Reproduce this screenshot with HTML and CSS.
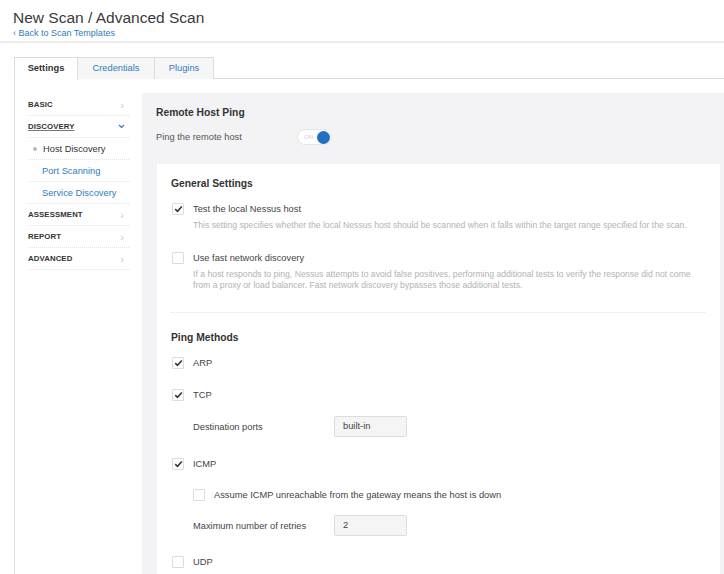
FILE: index.html
```html
<!DOCTYPE html>
<html>
<head>
<meta charset="utf-8">
<link rel="stylesheet" href="styles.css">
</head>
<body>
<header class="header">
  <h1 class="title">New Scan / Advanced Scan</h1>
  <a class="back">&lsaquo; Back to Scan Templates</a>
</header>

<nav class="tabs">
  <div class="tab active">Settings</div>
  <div class="tab tab-cred">Credentials</div>
  <div class="tab tab-plug">Plugins</div>
</nav>

<div class="layout">
  <aside class="sidebar">
    <div class="side-item"><span class="sec">BASIC</span><span class="chev">&rsaquo;</span></div>
    <div class="side-item"><span class="sec sec-open">DISCOVERY</span><span class="chev chev-down"><svg width="7" height="5" viewBox="0 0 7 5"><path d="M1 1 L3.5 3.5 L6 1" fill="none" stroke="#2e7cc1" stroke-width="1.2"/></svg></span></div>
    <div class="side-item sub current"><span class="dot"></span>Host Discovery</div>
    <div class="side-item sub link">Port Scanning</div>
    <div class="side-item sub link">Service Discovery</div>
    <div class="side-item"><span class="sec">ASSESSMENT</span><span class="chev">&rsaquo;</span></div>
    <div class="side-item"><span class="sec">REPORT</span><span class="chev">&rsaquo;</span></div>
    <div class="side-item"><span class="sec">ADVANCED</span><span class="chev">&rsaquo;</span></div>
  </aside>

  <main class="panel">
    <h2 class="panel-title">Remote Host Ping</h2>
    <div class="ping-row">
      <span class="ping-label">Ping the remote host</span>
      <span class="toggle"><span class="toggle-on">ON</span><span class="knob"></span></span>
    </div>

    <section class="card">
      <h3 class="card-title">General Settings</h3>
      <div class="check-row r-test"><span class="cb checked"><svg width="9" height="8" viewBox="0 0 9 8"><path d="M1.2 4.2 L3.5 6.3 L7.8 1.5" fill="none" stroke="#333" stroke-width="1.6"/></svg></span><span class="lbl">Test the local Nessus host</span></div>
      <p class="desc d-test">This setting specifies whether the local Nessus host should be scanned when it falls within the target range specified for the scan.</p>
      <div class="check-row r-fast"><span class="cb"></span><span class="lbl">Use fast network discovery</span></div>
      <p class="desc d-fast">If a host responds to ping, Nessus attempts to avoid false positives, performing additional tests to verify the response did not come<br>from a proxy or load balancer. Fast network discovery bypasses those additional tests.</p>
      <div class="sep"></div>

      <h3 class="card-title t-ping">Ping Methods</h3>
      <div class="check-row r-arp"><span class="cb checked"><svg width="9" height="8" viewBox="0 0 9 8"><path d="M1.2 4.2 L3.5 6.3 L7.8 1.5" fill="none" stroke="#333" stroke-width="1.6"/></svg></span><span class="lbl">ARP</span></div>
      <div class="check-row r-tcp"><span class="cb checked"><svg width="9" height="8" viewBox="0 0 9 8"><path d="M1.2 4.2 L3.5 6.3 L7.8 1.5" fill="none" stroke="#333" stroke-width="1.6"/></svg></span><span class="lbl">TCP</span></div>
      <div class="field-row r-ports"><span class="field-lbl">Destination ports</span><span class="input">built-in</span></div>
      <div class="check-row r-icmp"><span class="cb checked"><svg width="9" height="8" viewBox="0 0 9 8"><path d="M1.2 4.2 L3.5 6.3 L7.8 1.5" fill="none" stroke="#333" stroke-width="1.6"/></svg></span><span class="lbl">ICMP</span></div>
      <div class="check-row r-assume"><span class="cb"></span><span class="lbl lbl-big">Assume ICMP unreachable from the gateway means the host is down</span></div>
      <div class="field-row r-retries"><span class="field-lbl">Maximum number of retries</span><span class="input">2</span></div>
      <div class="check-row r-udp"><span class="cb"></span><span class="lbl">UDP</span></div>
    </section>
  </main>
</div>
</body>
</html>
```

FILE: styles.css
```css
* { box-sizing: border-box; }

html, body {
  margin: 0;
  padding: 0;
  background: #ffffff;
  font-family: "Liberation Sans", Arial, sans-serif;
  color: #444;
  overflow: hidden;
}

body {
  width: 724px;
  height: 574px;
}

.header {
  height: 43px;
  padding: 8px 13px 0;
  border-bottom: 2px solid #ececec;
}

.title {
  margin: 0;
  font-size: 15.5px;
  line-height: 19px;
  font-weight: normal;
  color: #3a3a3a;
}

.back {
  display: block;
  margin-top: 1px;
  font-size: 9px;
  line-height: 11px;
  color: #2e7cc1;
}

.tabs {
  display: flex;
  margin: 14px 0 0 14px;
  border-bottom: 1px solid #dcdcdc;
  height: 22px;
}

.tab {
  height: 22px;
  line-height: 20px;
  text-align: center;
  font-size: 9.3px;
  color: #2e7cc1;
  background: #f6f6f6;
  border: 1px solid #dcdcdc;
  border-left: none;
  border-bottom: none;
}

.tab.active {
  width: 64px;
  background: #ffffff;
  color: #333;
  font-weight: bold;
  border-left: 1px solid #dcdcdc;
  height: 23px;
}

.tab-cred { width: 77px; }
.tab-plug { width: 59px; }

.layout {
  display: flex;
  margin-left: 14px;
  height: 500px;
}

.sidebar {
  width: 128px;
  flex: none;
  border-left: 1px solid #e4e4e4;
  padding: 15px 13px 0 13px;
}

.side-item {
  height: 22px;
  display: flex;
  align-items: center;
  justify-content: space-between;
  border-bottom: 1px dotted #e2e2e2;
  font-size: 9.3px;
}

.sec {
  font-size: 7.8px;
  font-weight: bold;
  color: #333;
  letter-spacing: 0.1px;
}

.sec-open {
  text-decoration: underline;
  text-decoration-color: #777;
}

.chev {
  color: #c8c8c8;
  font-size: 11px;
  margin-right: 5px;
  line-height: 10px;
}

.chev-down {
  display: flex;
  margin-right: 4px;
}

.sub {
  justify-content: flex-start;
  padding-left: 14px;
  color: #333;
}

.sub.current { padding-left: 5px; }

.sub.link { color: #2e7cc1; }

.dot {
  width: 4px;
  height: 4px;
  border-radius: 50%;
  background: #bbbbbb;
  margin-right: 6px;
}

.panel {
  flex: 1;
  margin-top: 14px;
  background: #f3f3f5;
  padding: 13px 4px 0 14px;
}

.panel-title {
  margin: 0;
  font-size: 10.3px;
  line-height: 14px;
  font-weight: bold;
  color: #333;
}

.ping-row {
  display: flex;
  align-items: center;
  height: 16px;
  margin-top: 9px;
}

.ping-label {
  width: 141px;
  font-size: 9.3px;
  color: #555;
}

.toggle {
  width: 35px;
  height: 16px;
  border-radius: 8px;
  background: #fff;
  border: 1px solid #e6e6e6;
  display: flex;
  align-items: center;
  justify-content: space-between;
  padding: 0 1px 0 6px;
}

.toggle-on {
  font-size: 6px;
  color: #cfcfcf;
}

.knob {
  width: 13px;
  height: 13px;
  border-radius: 50%;
  background: #1f6fc5;
}

.card {
  margin: 18px 0 0 1px;
  background: #ffffff;
  border-top: 1px dotted #e6e6e6;
  padding: 13px 14px 20px 14px;
  height: 420px;
}

.card-title {
  margin: 0;
  font-size: 10.3px;
  line-height: 14px;
  font-weight: bold;
  color: #333;
}

.check-row {
  display: flex;
  align-items: center;
  height: 14px;
  font-size: 9.3px;
  color: #444;
}

.cb {
  width: 12px;
  height: 12px;
  border: 1px solid #dcdcdc;
  border-radius: 1px;
  background: #fff;
  display: flex;
  align-items: center;
  justify-content: center;
  margin-left: 1px;
  margin-right: 9px;
  flex: none;
}

.lbl { color: #444; }

.desc {
  margin: 4px 0 0 22px;
  font-size: 8.65px;
  line-height: 11px;
  color: #b3b3b3;
}

.sep {
  margin-top: 21px;
  border-top: 1px dotted #e4e4e4;
  margin-right: 1px;
}

.r-test { margin-top: 11px; }
.r-fast { margin-top: 20px; }
.t-ping { margin-top: 18px; }
.r-arp { margin-top: 11px; }
.r-tcp { margin-top: 18px; }

.field-row {
  display: flex;
  align-items: center;
  height: 21px;
  padding-left: 22px;
  font-size: 9.3px;
  color: #444;
}

.field-lbl { width: 141px; }

.input {
  width: 73px;
  height: 21px;
  border: 1px solid #dddddd;
  border-radius: 2px;
  background: #f5f5f5;
  padding-left: 8px;
  line-height: 19px;
  color: #444;
}

.r-ports { margin-top: 14px; }
.r-icmp { margin-top: 20px; }
.r-assume { margin-top: 17px; padding-left: 21px; }
.r-retries { margin-top: 13px; }
.r-udp { margin-top: 19px; }
```
